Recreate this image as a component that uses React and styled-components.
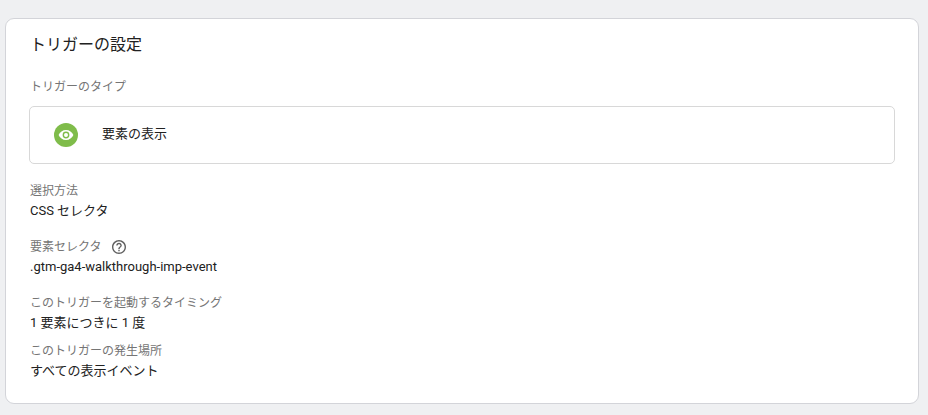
import React from "react";
import styled, { createGlobalStyle } from "styled-components";

const GlobalStyle = createGlobalStyle`
  * { box-sizing: border-box; }
  body {
    margin: 0;
    background: #eff0f2;
    color: #212121;
    font-family: Roboto, "Noto Sans CJK JP", sans-serif;
    font-size: 13px;
    line-height: 20px;
  }
`;

const Page = styled.main`
  padding: 18px 9px 11px 5px;
`;

const Card = styled.section`
  padding: 14px 23px 22px 24px;
  background: #fff;
  border: 1px solid #d3d4d9;
  border-radius: 9px;
`;

const Title = styled.h2`
  margin: 0 0 20px;
  font-size: 16px;
  font-weight: 400;
  line-height: 24px;
`;

const Label = styled.dt`
  display: flex;
  align-items: center;
  gap: 10px;
  height: 20px;
  font-size: 12px;
  color: #757575;
`;

const TypeLabel = styled.h3`
  margin: 0 0 9px;
  font-size: 12px;
  font-weight: 400;
  line-height: 20px;
  color: #757575;
`;

const TypeButton = styled.button`
  display: flex;
  align-items: center;
  gap: 24px;
  width: calc(100% + 1px);
  height: 58px;
  margin: 0 0 17px -1px;
  padding: 0 24px;
  background: #fff;
  border: 1px solid #d8d8d8;
  border-radius: 5px;
  color: inherit;
  font: inherit;
  text-align: left;
  cursor: pointer;
`;

const TypeIcon = styled.svg`
  flex: none;
  width: 24px;
  height: 24px;
`;

const TypeName = styled.span`
  padding-bottom: 2px;
`;

const Settings = styled.dl`
  margin: 0;
`;

const Setting = styled.div`
  margin-bottom: ${({ $gap }) => $gap}px;
`;

const Value = styled.dd`
  margin: 0;
`;

const HelpButton = styled.button`
  display: flex;
  padding: 0;
  background: none;
  border: 0;
  color: #616161;
  cursor: help;

  svg {
    width: 14px;
    height: 14px;
  }
`;

function EyeIcon() {
  return (
    <TypeIcon viewBox="0 0 24 24" aria-hidden="true">
      <circle cx="12" cy="12" r="12" fill="#7fbc4a" />
      <path
        fill="#fff"
        fillRule="evenodd"
        d="M12 7C8.7 7 5.8 9.1 4.6 12c1.2 2.9 4.1 5 7.4 5s6.200-2.100 7.400-5C18.200 9.100 15.300 7 12 7Zm0 8.400a3.400 3.400 0 1 1 0-6.800 3.400 3.400 0 0 1 0 6.800Zm0-5.400a2 2 0 1 0 0 4 2 2 0 0 0 0-4Z"
      />
    </TypeIcon>
  );
}

function HelpIcon() {
  return (
    <svg viewBox="2 2 20 20" fill="currentColor" aria-hidden="true">
      <path d="M11 18h2v-2h-2v2zm1-16C6.480 2 2 6.480 2 12s4.480 10 10 10 10-4.480 10-10S17.520 2 12 2zm0 18c-4.410 0-8-3.590-8-8s3.590-8 8-8 8 3.590 8 8-3.590 8-8 8zm0-14c-2.210 0-4 1.790-4 4h2c0-1.100.9-2 2-2s2 .9 2 2c0 2-3 1.750-3 5h2c0-2.250 3-2.500 3-5 0-2.210-1.790-4-4-4z" />
    </svg>
  );
}

const settings = [
  { label: "選択方法", value: "CSS セレクタ", gap: 16 },
  { label: "要素セレクタ", value: ".gtm-ga4-walkthrough-imp-event", gap: 16, help: true },
  { label: "このトリガーを起動するタイミング", value: "1 要素につきに 1 度", gap: 8 },
  { label: "このトリガーの発生場所", value: "すべての表示イベント", gap: 0 },
];

export default function App() {
  return (
    <>
      <GlobalStyle />
      <Page lang="ja">
        <Card>
          <Title>トリガーの設定</Title>
          <TypeLabel id="trigger-type">トリガーのタイプ</TypeLabel>
          <TypeButton type="button" aria-describedby="trigger-type">
            <EyeIcon />
            <TypeName>要素の表示</TypeName>
          </TypeButton>
          <Settings>
            {settings.map(({ label, value, gap, help }) => (
              <Setting key={label} $gap={gap}>
                <Label>
                  {label}
                  {help && (
                    <HelpButton type="button" aria-label="ヘルプ">
                      <HelpIcon />
                    </HelpButton>
                  )}
                </Label>
                <Value>{value}</Value>
              </Setting>
            ))}
          </Settings>
        </Card>
      </Page>
    </>
  );
}
